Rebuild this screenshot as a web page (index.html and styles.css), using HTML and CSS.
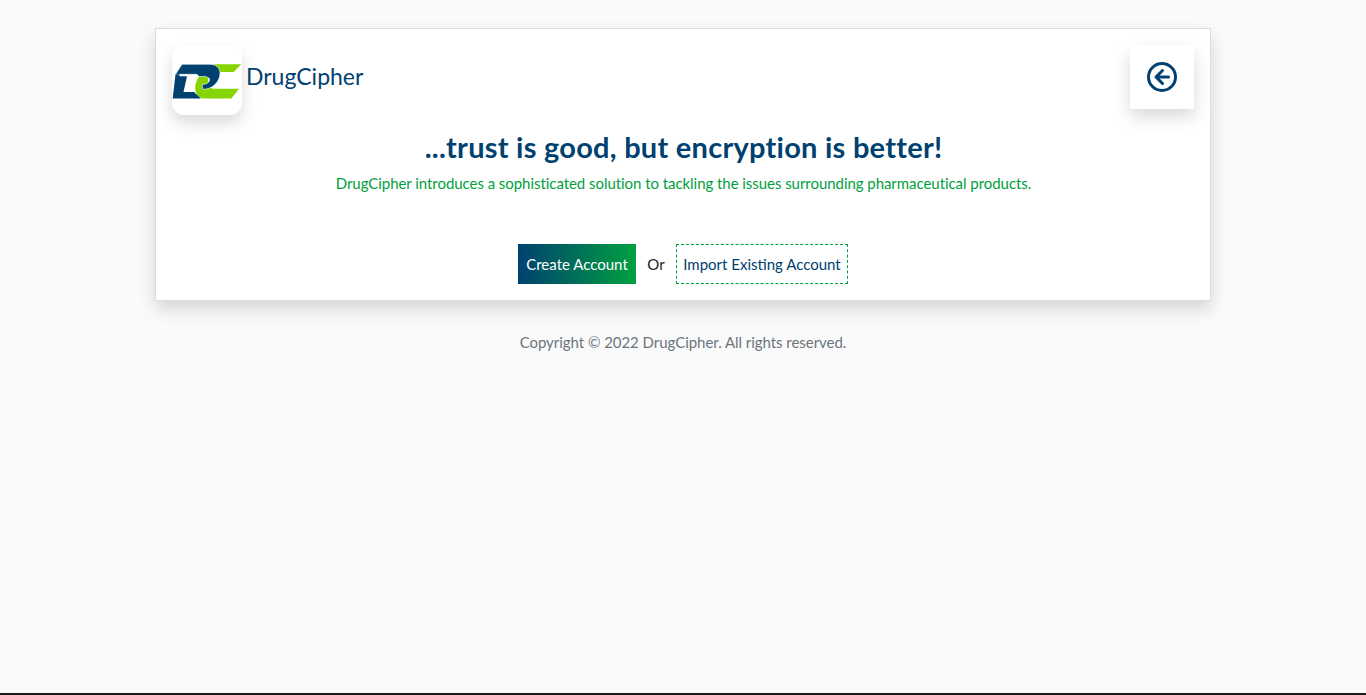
FILE: index.html
```html
<!DOCTYPE html>
<html lang="en">
<head>
<meta charset="utf-8">
<title>DrugCipher</title>
<link rel="stylesheet" href="styles.css">
</head>
<body>
<main class="page">
  <section class="card">
    <header class="top">
      <div class="brand">
        <div class="logo">
          <svg width="70" height="70" viewBox="0 0 70 70" aria-hidden="true">
            <path fill="#86d400" d="M69.300 19.300L61.700 27H42V19.300Z"/>
            <path fill="#86d400" d="M66.700 44.300L59.300 53.500H33C26 53.500 22.500 47.500 23.300 41C24 36 26 32 29 30H36V38C36 41 39 43.800 42 43.800H66.700Z"/>
            <path fill="#004170" stroke="#fff" stroke-width=".6" d="M10 19.300H38C46 19.300 49.500 25 47.500 32C45.500 39 39 44.300 31 44.300L30 39.500C34 39.500 37 38 37.500 35C38 33 35 31.500 32 31.500L27 31.500L25 29.300H3.500Z"/>
            <path fill="#004170" d="M3.500 29.300H7.500V31.300H15L11.500 47H22L29 53.500H.7Z"/>
          </svg>
        </div>
        <span class="brand-name">DrugCipher</span>
      </div>
      <button class="back" type="button" aria-label="Back">
        <svg width="32" height="32" viewBox="0 0 32 32" fill="none" stroke="#004170" stroke-width="3" stroke-linecap="round" stroke-linejoin="round" aria-hidden="true">
          <circle cx="16" cy="16" r="13.500"/>
          <path d="M16.500 9.500L10 16l6.500 6.500M10.500 16H22.500"/>
        </svg>
      </button>
    </header>
    <div class="intro">
      <h1 class="title">...trust is good, but encryption is better!</h1>
      <p class="lead">DrugCipher introduces a sophisticated solution to tackling the issues surrounding pharmaceutical products.</p>
    </div>
    <div class="actions">
      <a class="btn btn-primary" href="#">Create Account</a>
      <span class="or">Or</span>
      <a class="btn btn-dashed" href="#">Import Existing Account</a>
    </div>
  </section>
  <p class="copyright">Copyright © 2022 DrugCipher. All rights reserved.</p>
</main>
</body>
</html>
```
FILE: styles.css
```css
html {
  background: #1a1a1a;
}
body {
  margin: 0;
  height: 693px;
  background: #fafafa;
  font-family: "Lato", "Open Sans", sans-serif;
  overflow: hidden;
}
.page {
  width: 1056px;
  margin: 0 auto;
  padding-top: 28px;
}
.card {
  box-sizing: border-box;
  height: 273px;
  background: #fff;
  border: 1px solid #dcdcdc;
  box-shadow: 0 8px 16px rgba(0, 0, 0, .15);
  padding: 16px 15px 16px 16px;
  display: flex;
  flex-direction: column;
}
.top {
  display: flex;
  justify-content: space-between;
  align-items: flex-start;
  padding-right: 1px;
}
.brand {
  display: flex;
  align-items: center;
  gap: 4px;
}
.logo {
  width: 70px;
  height: 70px;
  background: #fff;
  border-radius: 12px;
  box-shadow: 0 8px 16px rgba(0, 0, 0, .15);
}
.logo svg {
  display: block;
}
.brand-name {
  font-size: 23px;
  line-height: 28px;
  color: #004170;
  margin-bottom: 8px;
}
.back {
  width: 64px;
  height: 64px;
  padding: 0;
  border: 0;
  background: #fff;
  box-shadow: 0 8px 16px rgba(0, 0, 0, .15);
  display: flex;
  align-items: center;
  justify-content: center;
}
.intro {
  text-align: center;
  margin-top: 14px;
}
.title {
  margin: 0;
  font-size: 29px;
  line-height: 36px;
  letter-spacing: .25px;
  font-weight: 700;
  color: #004170;
}
.lead {
  margin: 8px 0 0;
  font-size: 15px;
  line-height: 20px;
  letter-spacing: -.05px;
  color: #00a040;
}
.actions {
  margin-top: 51px;
  display: flex;
  justify-content: center;
  align-items: center;
  padding-right: 1px;
}
.btn {
  box-sizing: border-box;
  height: 40px;
  display: flex;
  align-items: center;
  justify-content: center;
  font-size: 15px;
  text-decoration: none;
}
.btn-primary {
  width: 118px;
  color: #fff;
  background: linear-gradient(90deg, #004170, #00a040);
}
.or {
  width: 40px;
  text-align: center;
  font-size: 15px;
  color: #1a1a1a;
}
.btn-dashed {
  width: 172px;
  color: #004170;
  border: 1px dashed #00a040;
}
.copyright {
  margin: 31px 0 0;
  text-align: center;
  font-size: 15px;
  line-height: 20px;
  letter-spacing: -.04px;
  color: #6c757d;
}
```
